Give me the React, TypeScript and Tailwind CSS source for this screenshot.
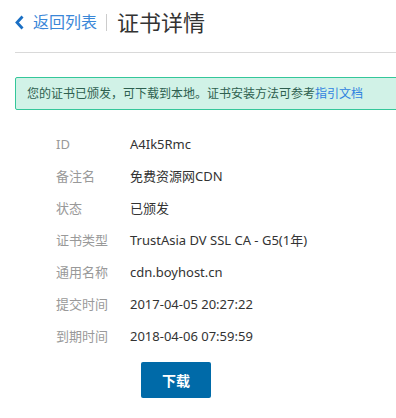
const rows: [string, string][] = [
  ['ID', 'A4Ik5Rmc'],
  ['备注名', '免费资源网CDN'],
  ['状态', '已颁发'],
  ['证书类型', 'TrustAsia DV SSL CA - G5(1年)'],
  ['通用名称', 'cdn.boyhost.cn'],
  ['提交时间', '2017-04-05 20:27:22'],
  ['到期时间', '2018-04-06 07:59:59'],
];

export default function App() {
  return (
    <div
      className="w-[396px] h-[418px] overflow-hidden bg-white"
      style={{ fontFamily: '"Noto Sans", "Noto Sans CJK SC", sans-serif' }}
    >
      {/* header */}
      <div className="ml-[15px] h-[53px] border-b border-[#d9d9d9] flex items-start pt-[8px]">
        <div className="flex items-center h-[28px]">
          <svg width="9" height="15" viewBox="0 0 9 15" className="mt-[1px]">
            <polyline points="7.5,1.5 2,7.5 7.5,13.5" fill="none" stroke="#1a6fc4" strokeWidth="2.8" />
          </svg>
          <span className="ml-[9px] text-[16px] text-[#3a87d8]">返回列表</span>
          <span className="ml-[9px] w-px h-[17px] bg-[#cccccc]" />
          <span className="ml-[10px] text-[22px] text-[#333333]">证书详情</span>
        </div>
      </div>

      {/* notice */}
      <div className="ml-[15px] mt-[24px] -mr-[4px] h-[33px] border border-[#34c79a] bg-[#d1f2e7] rounded-[2px] flex items-center pl-[11px] text-[12px] text-[#2e5f4f] whitespace-nowrap">
        您的证书已颁发，可下载到本地。证书安装方法可参考<span className="text-[#2f82e0]">指引文档</span>
      </div>

      {/* details */}
      <div className="mt-[19px] flex flex-col text-[13px]">
        {rows.map(([k, v]) => (
          <div key={k} className="flex items-center h-[32px]">
            <span className="ml-[56px] w-[74px] text-[#999999]">{k}</span>
            <span className="text-[#333333]">{v}</span>
          </div>
        ))}
      </div>

      <div className="ml-[141px] mt-[9px]">
        <button className="w-[70px] h-[36px] rounded-[2px] bg-[#006aa8] text-white text-[14px] font-bold">
          下载
        </button>
      </div>
    </div>
  );
}
